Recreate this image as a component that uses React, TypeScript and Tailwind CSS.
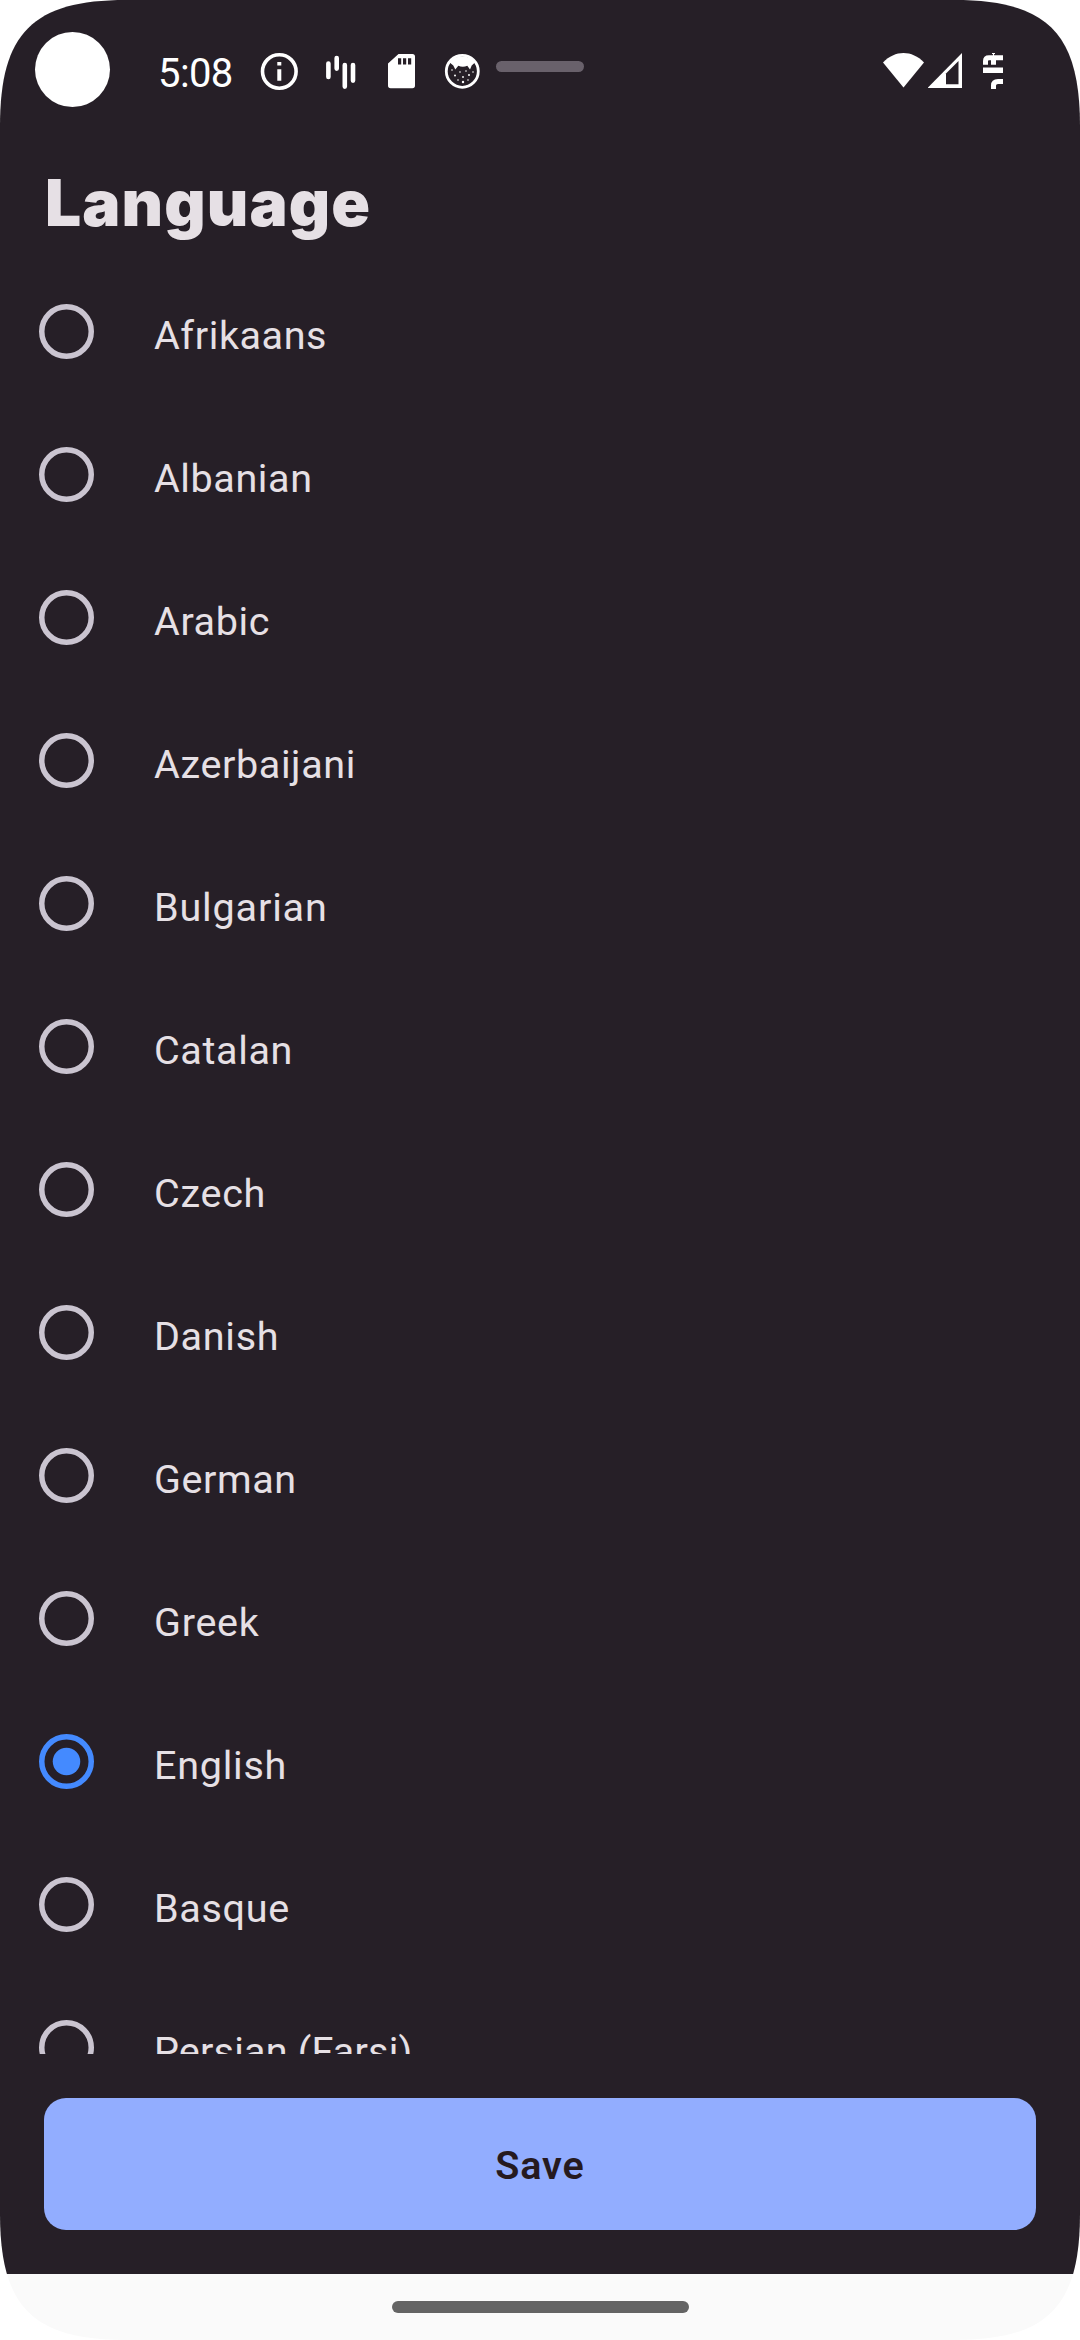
const languages = [
  { name: "Afrikaans", fit: "tracking-[0.6px]" },
  { name: "Albanian", fit: "tracking-[0.6px]" },
  { name: "Arabic", fit: "tracking-[0.62px]" },
  { name: "Azerbaijani", fit: "tracking-[0.6px]" },
  { name: "Bulgarian", fit: "tracking-[0.85px]" },
  { name: "Catalan", fit: "tracking-[0.65px]" },
  { name: "Czech", fit: "tracking-[0.75px]" },
  { name: "Danish", fit: "tracking-[0.7px]" },
  { name: "German", fit: "tracking-[0.6px]" },
  { name: "Greek", fit: "tracking-[0.75px]" },
  { name: "English", fit: "tracking-[0.75px]" },
  { name: "Basque", fit: "tracking-[0.7px]" },
  { name: "Persian (Farsi)", fit: "tracking-[0.2px]" },
];

function StatusBar() {
  return (
    <div className="flex h-[142px] shrink-0 items-start text-white">
      <div className="mt-8 ml-[35px] size-[75px] rounded-full bg-white" />
      <span className="mt-[50px] ml-[48px] w-[84px] font-['Roboto',sans-serif] text-[40px] leading-[47px] tracking-[-0.6px] whitespace-nowrap">5:08</span>
      <svg className="mt-[52px] ml-[18px] size-10 shrink-0" viewBox="0 0 40 40" fill="none">
        <circle cx="19.3" cy="19.5" r="16.8" stroke="white" strokeWidth="3.6" />
        <path d="M17.3 10h4v3.6h-4zM17.3 17.3h4v11.4h-4z" fill="white" />
      </svg>
      <svg className="mt-[52px] ml-[22px] size-10 shrink-0" viewBox="0 0 40 40" stroke="white" strokeWidth="4.6" strokeLinecap="round">
        <path d="M6.4 11.5v13.5M14.7 6v10.6M22.8 13v21.6M31 13v15.6" />
      </svg>
      <svg className="mt-[52px] ml-[24px] size-10 shrink-0" viewBox="0 0 40 40">
        <path d="M12.500 2H26.400a2.600 2.600 0 0 1 2.600 2.600V33.600a2.600 2.600 0 0 1-2.600 2.600H4.600A2.600 2.600 0 0 1 2 33.600V11.500z" fill="white" />
        <path d="M12 6.200h3.200v6.400H12zM17 6.200h3.200v6.400H17zM22 6.200h3.200v6.400H22z" fill="#261f27" />
      </svg>
      <svg className="mt-[52px] ml-[16px] size-10 shrink-0" viewBox="0 0 40 40">
        <circle cx="20.300" cy="19.300" r="16" fill="none" stroke="white" strokeWidth="2.800" />
        <path d="M6 11.500C10 2 30.500 2 34.600 11.500L33 10.500L29.700 13.500L28 17.500L25.300 13.700Q20.800 16 16.300 13.700L13.300 17.500L11.300 13.500L7.700 10.500z" fill="white" />
        <g fill="white">
          <circle cx="13" cy="23.500" r="1" /><circle cx="18" cy="20" r=".8" />
          <circle cx="24" cy="19" r=".8" /><circle cx="27" cy="23" r="1" />
          <circle cx="21" cy="25" r=".9" /><circle cx="16" cy="28" r=".8" />
          <circle cx="21" cy="30" r="1.200" /><circle cx="26" cy="28" r=".8" />
          <circle cx="31" cy="20" r=".8" /><circle cx="10" cy="18" r=".8" />
        </g>
      </svg>
      <div className="mt-[61px] ml-[14px] h-[11px] w-[88px] shrink-0 rounded-full bg-[#69616b]" />
      <svg className="mt-[52px] ml-[299px] h-10 w-[42px] shrink-0" viewBox="0 0 42 40" fill="white">
        <path d="M0 10.500C12-2.200 29-2.200 41 10.500L20.500 35.500z" />
      </svg>
      <svg className="mt-[52px] ml-[3px] h-10 w-[36px] shrink-0" viewBox="0 0 36 40">
        <path d="M-.5 36L34 1V36z" fill="white" />
        <path d="M18 21.500L30.500 9V32.200H18z" fill="#261f27" />
      </svg>
      <svg className="mt-[52px] ml-[19px] h-10 w-[20px] shrink-0" viewBox="0 0 20 40" fill="none" stroke="white">
        <path d="M2.500 12.700V9Q2.500 5.800 6 5.800H20M10.500 12.700V5" strokeWidth="5" />
        <path d="M9 1.500H12M10.500 1.500V4" strokeWidth="1.200" />
        <path d="M0 18.200H20" strokeWidth="5.600" />
        <path d="M10.500 37V33.500Q10.500 29.500 15 29.500H20" strokeWidth="5" />
      </svg>
    </div>
  );
}

function Radio({ checked }: { checked: boolean }) {
  return (
    <svg className={checked ? "size-[55px] shrink-0 text-[#448aff]" : "size-[55px] shrink-0 text-[#cac4d0]"} viewBox="0 0 55 55">
      <circle cx="27.5" cy="27.5" r="24.75" fill="none" stroke="currentColor" strokeWidth="5.5" />
      {checked && <circle cx="27.5" cy="27.5" r="13.75" fill="currentColor" />}
    </svg>
  );
}

export default function App() {
  return (
    <div className="flex h-[2340px] w-[1080px] flex-col overflow-hidden bg-[#fafafa] [clip-path:path('M0_126C0_33_33_0_126_0H954C1047_0_1080_33_1080_126V2214C1080_2307_1047_2340_954_2340H126C33_2340_0_2307_0_2214Z')]">
      <main className="flex h-[2274px] shrink-0 flex-col bg-[#261f27]">
        <StatusBar />
        <h1 className="mt-[21px] ml-[45px] h-[80px] shrink-0 font-['Inter',sans-serif] text-[64px] leading-[80px] font-black tracking-[1.1px] whitespace-nowrap text-[#e6e0e5]">Language</h1>
        <ul className="mt-[17px] min-h-0 flex-1 overflow-hidden">
          {languages.map(({ name, fit }) => (
            <li key={name} className="flex h-[143px] items-center pl-[39px]">
              <Radio checked={name === "English"} />
              <span className={`mt-[7px] ml-[60px] font-['Roboto',sans-serif] text-[39.500px] leading-[47px] whitespace-nowrap text-[#e6e0e5] ${fit}`}>{name}</span>
            </li>
          ))}
        </ul>
        <div className="h-[220px] shrink-0 px-11 py-11">
          <button className="flex h-[132px] w-full items-center justify-center rounded-[22px] bg-[#92adff] pt-[3px] font-['Roboto',sans-serif] text-[39.500px] font-semibold tracking-[0.9px] text-[#261a1f]">Save</button>
        </div>
      </main>
      <div className="flex h-[66px] shrink-0 items-start justify-center pt-[27px]">
        <div className="h-[12px] w-[297px] rounded-full bg-[#646464]" />
      </div>
    </div>
  );
}
